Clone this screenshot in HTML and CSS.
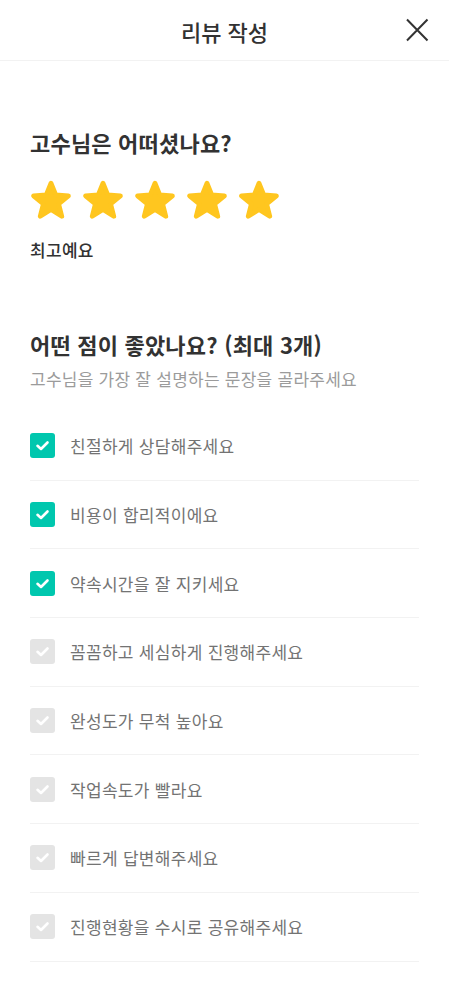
FILE: index.html
```html
<!DOCTYPE html>
<html lang="ko">
<head>
<meta charset="utf-8">
<title>리뷰 작성</title>
<link rel="stylesheet" href="styles.css">
</head>
<body>
<header class="topbar">
  <h1 class="topbar-title">리뷰 작성</h1>
  <button class="close-btn" aria-label="닫기">
    <svg width="24" height="24" viewBox="0 0 24 24"><path d="M2 1.5 L22.5 22.5 M22.5 1.5 L2 22.5" stroke="#333" stroke-width="2" fill="none"/></svg>
  </button>
</header>

<main class="content">
  <section class="rating">
    <h2 class="heading">고수님은 어떠셨나요?</h2>
    <div class="stars">
      <svg class="star" viewBox="0 0 24 24"><polygon points="12,2.8 14.59,9.24 21.51,9.71 16.18,14.16 17.88,20.89 12,17.2 6.12,20.89 7.82,14.16 2.49,9.71 9.41,9.24"/></svg>
      <svg class="star" viewBox="0 0 24 24"><polygon points="12,2.8 14.59,9.24 21.51,9.71 16.18,14.16 17.88,20.89 12,17.2 6.12,20.89 7.82,14.16 2.49,9.71 9.41,9.24"/></svg>
      <svg class="star" viewBox="0 0 24 24"><polygon points="12,2.8 14.59,9.24 21.51,9.71 16.18,14.16 17.88,20.89 12,17.2 6.12,20.89 7.82,14.16 2.49,9.71 9.41,9.24"/></svg>
      <svg class="star" viewBox="0 0 24 24"><polygon points="12,2.8 14.59,9.24 21.51,9.71 16.18,14.16 17.88,20.89 12,17.2 6.12,20.89 7.82,14.16 2.49,9.71 9.41,9.24"/></svg>
      <svg class="star" viewBox="0 0 24 24"><polygon points="12,2.8 14.59,9.24 21.51,9.71 16.18,14.16 17.88,20.89 12,17.2 6.12,20.89 7.82,14.16 2.49,9.71 9.41,9.24"/></svg>
    </div>
    <p class="rating-label">최고예요</p>
  </section>

  <section class="good-points">
    <h2 class="heading">어떤 점이 좋았나요? (최대 3개)</h2>
    <p class="subtitle">고수님을 가장 잘 설명하는 문장을 골라주세요</p>
    <ul class="options">
      <li class="option checked"><span class="box"><svg viewBox="0 0 25 25"><path d="M7.5 12.8 L11 16 L17.5 9.5" /></svg></span><span class="label">친절하게 상담해주세요</span></li>
      <li class="option checked"><span class="box"><svg viewBox="0 0 25 25"><path d="M7.5 12.8 L11 16 L17.5 9.5" /></svg></span><span class="label">비용이 합리적이에요</span></li>
      <li class="option checked"><span class="box"><svg viewBox="0 0 25 25"><path d="M7.5 12.8 L11 16 L17.5 9.5" /></svg></span><span class="label">약속시간을 잘 지키세요</span></li>
      <li class="option"><span class="box"><svg viewBox="0 0 25 25"><path d="M7.5 12.8 L11 16 L17.5 9.5" /></svg></span><span class="label">꼼꼼하고 세심하게 진행해주세요</span></li>
      <li class="option"><span class="box"><svg viewBox="0 0 25 25"><path d="M7.5 12.8 L11 16 L17.5 9.5" /></svg></span><span class="label">완성도가 무척 높아요</span></li>
      <li class="option"><span class="box"><svg viewBox="0 0 25 25"><path d="M7.5 12.8 L11 16 L17.5 9.5" /></svg></span><span class="label">작업속도가 빨라요</span></li>
      <li class="option"><span class="box"><svg viewBox="0 0 25 25"><path d="M7.5 12.8 L11 16 L17.5 9.5" /></svg></span><span class="label">빠르게 답변해주세요</span></li>
      <li class="option"><span class="box"><svg viewBox="0 0 25 25"><path d="M7.5 12.8 L11 16 L17.5 9.5" /></svg></span><span class="label">진행현황을 수시로 공유해주세요</span></li>
    </ul>
  </section>
</main>
</body>
</html>
```

FILE: styles.css
```css
* { box-sizing: border-box; }
html, body {
  margin: 0;
  padding: 0;
  background: #fff;
  font-family: "Noto Sans CJK KR", "Noto Sans", sans-serif;
  color: #323232;
}
.topbar {
  position: relative;
  height: 61px;
  border-bottom: 1px solid #f2f2f2;
  display: flex;
  align-items: center;
  justify-content: center;
}
.topbar-title {
  margin: 0;
  font-size: 22px;
  font-weight: 500;
  line-height: 30px;
  color: #323232;
  padding-top: 1px;
}
.close-btn {
  position: absolute;
  right: 20px;
  top: 18px;
  width: 24px;
  height: 24px;
  padding: 0;
  border: 0;
  background: none;
}
.close-btn svg { display: block; }
.content {
  padding: 0 30px;
}
.rating {
  padding-top: 66px;
}
.heading {
  margin: 0;
  font-size: 22px;
  font-weight: 700;
  line-height: 31px;
  color: #323232;
  letter-spacing: 0.2px;
}
.stars {
  display: flex;
  gap: 8px;
  margin-top: 20px;
  margin-left: -1px;
}
.star {
  width: 44px;
  height: 44px;
  display: block;
}
.star polygon {
  fill: #ffc61f;
  stroke: #ffc61f;
  stroke-width: 2.6;
  stroke-linejoin: round;
}
.rating-label {
  margin: 16px 0 0;
  font-size: 17px;
  font-weight: 500;
  line-height: 24px;
  color: #323232;
  letter-spacing: 0.3px;
}
.good-points {
  padding-top: 67px;
}
.subtitle {
  margin: 6px 0 0;
  font-size: 17px;
  line-height: 25px;
  color: #9b9b9b;
  letter-spacing: 0.25px;
}
.options {
  list-style: none;
  margin: 21px 0 0;
  padding: 0;
}
.option {
  height: 68.7px;
  border-bottom: 1px solid #f2f2f2;
  display: flex;
  align-items: center;
  gap: 15px;
}
.box {
  width: 25px;
  height: 25px;
  border-radius: 3px;
  background: #e4e4e4;
  display: flex;
  flex: none;
}
.box svg {
  width: 25px;
  height: 25px;
}
.box path {
  fill: none;
  stroke: #fff;
  stroke-width: 2.6;
  stroke-linecap: round;
  stroke-linejoin: round;
}
.option.checked .box {
  background: #00c7ae;
}
.label {
  font-size: 17px;
  line-height: 25px;
  color: #737373;
  letter-spacing: 0.3px;
}
```
